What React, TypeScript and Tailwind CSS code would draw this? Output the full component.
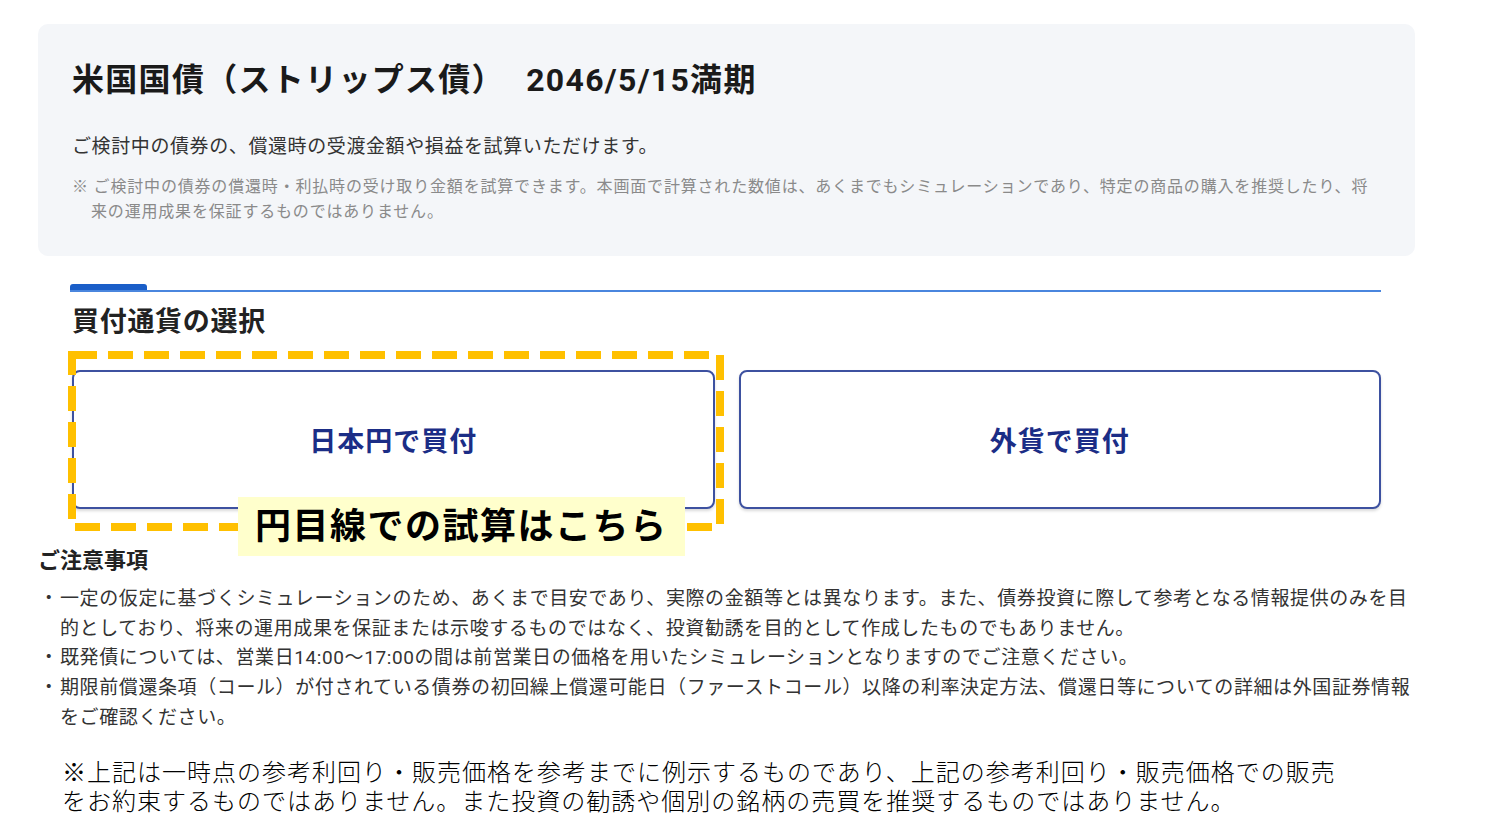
import React from "react";

const notes = [
  "一定の仮定に基づくシミュレーションのため、あくまで目安であり、実際の金額等とは異なります。また、債券投資に際して参考となる情報提供のみを目的としており、将来の運用成果を保証または示唆するものではなく、投資勧誘を目的として作成したものでもありません。",
  "既発債については、営業日14:00〜17:00の間は前営業日の価格を用いたシミュレーションとなりますのでご注意ください。",
  "期限前償還条項（コール）が付されている債券の初回繰上償還可能日（ファーストコール）以降の利率決定方法、償還日等についての詳細は外国証券情報をご確認ください。",
];

function CurrencyButton({ label }: { label: string }) {
  return (
    <button className="h-[139px] rounded-lg border-2 border-[#3d51a0] bg-white pt-[5px] shadow-[0_2px_3px_rgba(0,0,0,0.15)] text-[27px] font-bold tracking-[1px] text-[#1b2d86]">
      {label}
    </button>
  );
}

export default function App() {
  return (
    <div className="min-h-[834px] w-[1509px] bg-white pt-6 text-[#222] font-['Roboto','Noto_Sans_CJK_JP',sans-serif]">
      {/* Header card */}
      <div className="ml-[38px] w-[1377px] rounded-[10px] bg-[#f4f6f9] px-[34px] pt-8 pb-[32px]">
        <h1 className="text-[32px] font-bold leading-[48px] tracking-[1.3px] text-[#1a1a1a]">
          米国国債（ストリップス債） <span className="pl-3">2046/5/15満期</span>
        </h1>
        <p className="mt-[29px] text-[19px] leading-[28px] tracking-[0.6px] text-[#333]">
          ご検討中の債券の、償還時の受渡金額や損益を試算いただけます。
        </p>
        <p className="mt-[13px] pl-[19px] -indent-[19px] text-[16px] leading-[25px] tracking-[0.82px] text-[#8a8a8a]">
          ※ ご検討中の債券の償還時・利払時の受け取り金額を試算できます。本画面で計算された数値は、あくまでもシミュレーションであり、特定の商品の購入を推奨したり、将来の運用成果を保証するものではありません。
        </p>
      </div>

      {/* Currency selection */}
      <div className="ml-[70px] mt-7 w-[1311px]">
        <div className="h-[6px] w-[77px] rounded-t-[3px] bg-[#1a5ec8]" />
        <div className="h-[2px] bg-[#4a86de]" />
        <div className="pl-[2px]">
          <h2 className="mt-[10px] text-[27px] font-bold leading-[40px] tracking-[0.7px] text-[#222]">買付通貨の選択</h2>
          <div className="relative mt-[28px] grid grid-cols-2 gap-6">
            <CurrencyButton label="日本円で買付" />
            <CurrencyButton label="外貨で買付" />

            {/* annotation overlay */}
            <svg className="pointer-events-none absolute left-[-4px] top-[-19px]" width="656" height="180">
              <rect x="4" y="4" width="648" height="172" fill="none" stroke="#ffc000" strokeWidth="8" strokeDasharray="25 11" />
            </svg>
            <div className="absolute left-[166px] top-[127px] flex h-[59px] w-[447px] items-center bg-[#ffffcc] pl-[17px] text-[36px] font-bold tracking-[1.5px] text-black">
              円目線での試算はこちら
            </div>
          </div>
        </div>
      </div>

      {/* Notes */}
      <div className="ml-[38px] mt-[37px] w-[1377px]">
        <h3 className="text-[22px] font-bold leading-[30px] text-[#222]">ご注意事項</h3>
        <ul className="mt-2 pr-[4px]">
          {notes.map((n, i) => (
            <li key={i} className="flex text-[19px] leading-[29.7px] tracking-[0.6px] text-[#333]">
              <span className="w-[22px] shrink-0 text-center">・</span>
              <span>{n}</span>
            </li>
          ))}
        </ul>
      </div>

      <p className="ml-[62px] mt-[26px] w-[1290px] text-[24px] font-light leading-[29px] tracking-[1px] text-black">
        ※上記は一時点の参考利回り・販売価格を参考までに例示するものであり、上記の参考利回り・販売価格での販売をお約束するものではありません。また投資の勧誘や個別の銘柄の売買を推奨するものではありません。
      </p>
    </div>
  );
}
